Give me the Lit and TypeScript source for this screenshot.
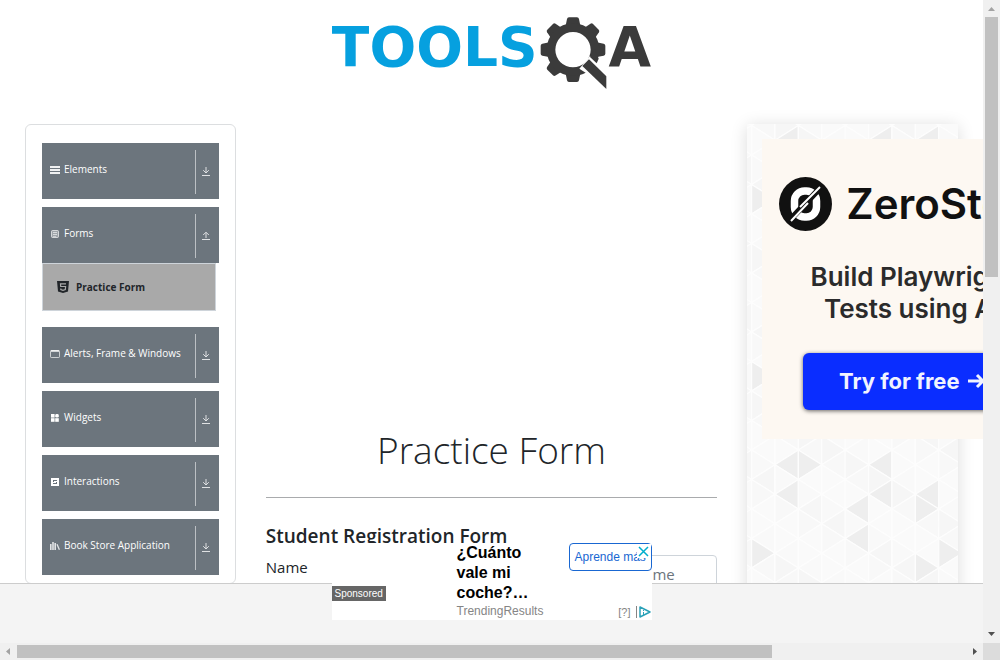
import { LitElement, html, css, svg, TemplateResult } from "lit";
import { customElement, state } from "lit/decorators.js";

interface Group {
  name: string;
  icon: TemplateResult;
  children?: string[];
}

const groups: Group[] = [
  { name: "Elements", icon: svg`<path d="M0 1h10v2H0zM0 4h10v2H0zM0 7h10v2H0z" opacity=".9" />` },
  {
    name: "Forms",
    icon: svg`<rect x="1.5" y="1.5" width="7" height="7" rx="1" fill="#fff" fill-opacity=".35" stroke="#fff" stroke-opacity=".65" /><path d="M3 3h4v1H3zM3 5h4v1H3zM3 7h3v.7H3z" opacity=".6" />`,
    children: ["Practice Form"],
  },
  {
    name: "Alerts, Frame & Windows",
    icon: svg`<rect x=".5" y="1.5" width="9" height="7" rx=".8" fill="none" stroke="#fff" stroke-opacity=".65" /><path d="M1 1h8v2H1z" opacity=".7" />`,
  },
  {
    name: "Widgets",
    icon: svg`<rect x="1" y="1" width="3.6" height="3.6" /><rect x="5.2" y="1" width="3.6" height="3.6" rx="1.4" /><rect x="1" y="5.2" width="3.6" height="3.6" /><rect x="5.2" y="5.2" width="3.6" height="3.6" />`,
  },
  {
    name: "Interactions",
    icon: svg`<path fill-rule="evenodd" d="M1 1h8v8H1zM3 3v2h1V4h3V3zM7 7V5H6v1H3v1z" />`,
  },
  {
    name: "Book Store Application",
    icon: svg`<path d="M0 3h1.6v6H0zM2.2 1h1.6v8H2.2zM4.4 2H6v7H4.4zM6.4 3.4l1.2-.4L10 8.6l-1.2.4z" opacity=".8" />`,
  },
];

// Triangular wallpaper: strips between vertical lines, apex rows half a cell apart.
const STEP_X = 23.4;
const STEP_Y = 14.75;
const darkCells = new Set([
  "1:1", "5:1", "7:1", "0:5", "0:17", "1:23", "2:23", "5:23", "1:25", "5:25",
  "7:25", "7:26", "4:26", "0:29", "8:29", "7:30", "4:28",
]);
const wallpaper = () => {
  const cells: TemplateResult[] = [];
  for (let i = -1; i < 9; i++) {
    const left = 4.7 + i * STEP_X;
    const right = left + STEP_X;
    for (let j = -1; j < 39; j++) {
      const y = 1.5 + j * STEP_Y;
      const pointsLeft = Math.abs(i % 2) === Math.abs(j % 2);
      const apex = pointsLeft ? left : right;
      const base = pointsLeft ? right : left;
      const fill = darkCells.has(`${i}:${j}`)
        ? "#eeeeee"
        : ["#f8f8f8", "#fafafa", "#f6f6f6", "#fafafa", "#f9f9f9"][(i * 7 + j * 3 + 60) % 5];
      cells.push(svg`<polygon points="${apex},${y} ${base},${y - STEP_Y} ${base},${y + STEP_Y}" fill=${fill} />`);
    }
  }
  return html`<svg class="wallpaper" viewBox="0 0 211 560" preserveAspectRatio="xMidYMin slice" aria-hidden="true">
    <g stroke="#fdfdfd" stroke-width="1.2">${cells}</g>
  </svg>`;
};

@customElement("tools-logo")
class ToolsLogo extends LitElement {
  static styles = css`
    :host {
      display: flex;
      justify-content: center;
      font: 700 55px/64px "DejaVu Sans", sans-serif;
      color: #3b3b3b;
    }
    .blue { color: #06a0df; }
    .gear { width: 67px; height: 73px; margin: 2px 2px 0; }
  `;
  render() {
    return html`<span class="blue">TOOLS</span>
      <svg class="gear" viewBox="662 35 201 219" role="img" aria-label="Q">
        <g fill="#3b3b3b">
          ${[0, 45, 90, 180, 225, 270, 315].map(
            (a) => svg`<path transform="rotate(${a} 761 133)" d="M738 66L743 41Q744 36 749 36H773Q778 36 779 41L784 66Z" />`
          )}
          <path fill-rule="evenodd" d="M761 54a79 79 0 1 0 0 158a79 79 0 1 0 0-158zM761 80a53 53 0 1 1 0 106a53 53 0 1 1 0-106z" />
        </g>
        <path fill="#fff" d="M780 190L812 152L842 180L863 172V254L845 248L800 203Z" />
        <path fill="#3b3b3b" d="M789 182L809 162L861 213V251Z" />
        <path fill="#3b3b3b" d="M812 155L832 174L838 160L826 130Z" />
      </svg>
      <span>A</span>`;
  }
}

@customElement("side-menu")
class SideMenu extends LitElement {
  static styles = css`
    :host { display: block; }
    .card {
      border: 1px solid #dcdee0;
      border-radius: 6px;
      padding: 18px 16px 8px;
      display: grid;
      gap: 8px;
    }
    .group {
      width: 100%;
      height: 56px;
      padding: 0;
      border: 0;
      background: #6c757d;
      color: #fff;
      display: flex;
      align-items: center;
      font: 500 10px/15px "Open Sans", sans-serif;
      text-align: left;
    }
    .label { flex: 1; display: flex; align-items: center; padding-bottom: 2px; }
    .icon { width: 10px; height: 10px; fill: #fff; margin: 0 4px 0 8px; flex: none; }
    .name { white-space: nowrap; padding-bottom: 2px; }
    .toggle {
      height: 44px;
      width: 23px;
      border-left: 1px solid #bcc0c4;
      display: flex;
      align-items: center;
      justify-content: center;
      margin-top: 2px;
    }
    .arrow { width: 8px; height: 9px; margin: 0 2px 2px 0; fill: none; stroke: #dfe1e3; }
    .list {
      list-style: none;
      margin: 0 3px 8px 0;
      padding: 0;
      border: 1px solid #ced4da;
      background: #a9a9a9;
    }
    .link {
      display: flex;
      align-items: center;
      gap: 7px;
      height: 46px;
      padding-left: 14px;
      color: #212529;
      text-decoration: none;
      font: 700 10px/15px "Open Sans", sans-serif;
    }
    .badge { width: 12px; height: 14px; }
  `;
  @state() private open = "Forms";
  render() {
    return html`<nav class="card">
      ${groups.map((g) => {
        const open = g.name === this.open;
        return html`<div>
          <button class="group" aria-expanded=${open} @click=${() => (this.open = open ? "" : g.name)}>
            <span class="label">
              <svg class="icon" viewBox="0 0 10 10" aria-hidden="true">${g.icon}</svg>
              <span class="name">${g.name}</span>
            </span>
            <span class="toggle">
              <svg class="arrow" viewBox="0 0 8 9" aria-hidden="true">
                <path d=${open ? "M0 8.5h8M4 7V1.5M1.2 4L4 1.2L6.8 4" : "M0 8.5h8M4 0v6M1.2 3.2L4 6L6.8 3.2"} />
              </svg>
            </span>
          </button>
          ${open && g.children
            ? html`<ul class="list">
                ${g.children.map(
                  (c) => html`<li>
                    <a class="link" href="#">
                      <svg class="badge" viewBox="0 0 12 14" aria-hidden="true">
                        <path fill="#212529" d="M0 1h12l-1 10.5L6 13l-5-1.500z" />
                        <path fill="none" stroke="#a9a9a9" stroke-width="1.200" d="M9 3.800H3.500L3.700 6.500h4.900L8.300 9.600L6 10.300L3.800 9.600V8.500" />
                      </svg>${c}</a>
                  </li>`
                )}
              </ul>`
            : ""}
        </div>`;
      })}
    </nav>`;
  }
}

@customElement("zero-banner")
class ZeroBanner extends LitElement {
  static styles = css`
    :host { display: block; font-family: Inter, sans-serif; }
    .panel {
      position: relative;
      height: 560px;
      background: #fff;
      box-shadow: 0 2px 16px rgba(0, 0, 0, 0.14);
      padding: 15px 0 0 15px;
      box-sizing: border-box;
    }
    .wallpaper { position: absolute; inset: 0; width: 100%; height: 100%; }
    .ad {
      position: relative;
      width: 300px;
      height: 300px;
      box-sizing: border-box;
      padding-top: 35px;
      background: #fdf8f2;
      color: #111;
      text-align: center;
    }
    .brand {
      display: flex;
      align-items: center;
      gap: 14px;
      height: 60px;
      padding-left: 17px;
      font-size: 42px;
      font-weight: 600;
      line-height: 60px;
    }
    .mark { width: 53px; height: 54px; }
    .pitch { margin: 27px 0 0; font-size: 26px; line-height: 32px; font-weight: 600; color: #2b2b2b; }
    .try {
      margin: 28px auto 0;
      width: 218px;
      height: 57px;
      box-sizing: border-box;
      padding-bottom: 2px;
      border-radius: 6px;
      background: #0a2dff;
      box-shadow: 0 1px 4px rgba(0, 0, 0, 0.6);
      display: flex;
      align-items: center;
      justify-content: center;
      gap: 8px;
      font-size: 22px;
      font-weight: 700;
      text-decoration: none;
      color: #f1f3ff;
    }
    .go { width: 18px; height: 16px; fill: none; stroke: #f1f3ff; stroke-width: 3; }
  `;
  render() {
    return html`<aside class="panel">
      ${wallpaper()}
      <div class="ad">
        <div class="brand">
          <svg class="mark" viewBox="0 0 53 54" aria-hidden="true">
            <ellipse cx="26.5" cy="27" rx="26.500" ry="27" fill="#111" />
            <rect x="15.500" y="14" width="22" height="26" rx="10" fill="none" stroke="#fff" stroke-width="7.500" />
            <path d="M9 45L43 9" stroke="#111" stroke-width="6" />
            <path d="M12 44L29 26M21 30L41 10" stroke="#fff" stroke-width="2" />
          </svg>
          <span>ZeroStep</span>
        </div>
        <p class="pitch">Build Playwright<br />Tests using AI</p>
        <a class="try" href="#">Try for free
          <svg class="go" viewBox="0 0 18 16" aria-hidden="true"><path d="M0 8h15M9 2l6 6l-6 6" /></svg>
        </a>
      </div>
    </aside>`;
  }
}

@customElement("sticky-ad")
class StickyAd extends LitElement {
  static styles = css`
    :host {
      display: block;
      position: absolute;
      inset: auto 0 0 0;
      height: 60px;
      box-sizing: border-box;
      border-top: 1px solid #ccc;
      background: #f4f4f4;
      font-family: "Liberation Sans", Arial, sans-serif;
    }
    .box {
      position: absolute;
      left: 50%;
      bottom: 23px;
      width: 320px;
      margin-left: -160px;
      height: 77px;
      background: #fff;
      display: grid;
      grid-template: 77px / 125px 1fr 83px;
      align-items: start;
    }
    .tag {
      align-self: end;
      justify-self: start;
      margin-bottom: 19px;
      padding: 0 3px;
      background: #666;
      color: #fff;
      font-size: 10px;
      line-height: 15px;
    }
    .title { margin: 0; font-size: 16px; line-height: 20px; font-weight: 700; color: #000; width: 90px; }
    .source { display: block; font-size: 12px; line-height: 17px; color: #858585; }
    .cta {
      display: block;
      width: 83px;
      height: 28px;
      box-sizing: border-box;
      border: 1px solid #1967d2;
      border-radius: 4px;
      background: #fff;
      color: #1967d2;
      font-size: 12px;
      line-height: 26px;
      padding-left: 5px;
      text-decoration: none;
      white-space: nowrap;
    }
    .side { display: flex; flex-direction: column; justify-content: space-between; height: 77px; }
    .info {
      display: flex;
      justify-content: flex-end;
      align-items: center;
      gap: 5px;
      font-size: 11px;
      line-height: 16px;
      color: #858585;
      padding-right: 1px;
    }
    .choices { width: 15px; height: 12px; }
    .close { position: absolute; top: 1px; right: 1px; width: 14px; height: 14px; padding: 0; border: 0; background: #fff; }
    .cross { display: block; width: 14px; height: 14px; }
  `;
  render() {
    return html`<div class="box">
      <span class="tag">Sponsored</span>
      <div>
        <h2 class="title">¿Cuánto vale mi coche?…</h2>
        <span class="source">TrendingResults</span>
      </div>
      <div class="side">
        <a class="cta" href="#">Aprende más</a>
        <div class="info"><span>[?]</span>
          <svg class="choices" viewBox="0 0 15 12" fill="none" aria-hidden="true">
            <path d="M.5 0v12" stroke="#858585" />
            <path d="M4 1L14 6L4 11Z" stroke="#2aa1b8" stroke-width="1.500" stroke-linejoin="round" />
            <path d="M7.500 4v1M7.500 6v3" stroke="#2aa1b8" />
          </svg>
        </div>
      </div>
      <button class="close" aria-label="Cerrar">
        <svg class="cross" viewBox="0 0 14 14"><path d="M2 3l9 9M11 3l-9 9" stroke="#00aecd" stroke-width="1.500" /></svg>
      </button>
    </div>`;
  }
}

@customElement("app-root")
class AppRoot extends LitElement {
  static styles = css`
    :host {
      display: grid;
      grid-template: minmax(0, 1fr) 17px / minmax(0, 1fr) 17px;
      height: 100vh;
      background: #fff;
      color: #212529;
      font: 400 15px/24px "Open Sans", sans-serif;
    }
    .view { position: relative; overflow: hidden; }
    .header { height: 109px; padding-top: 15px; }
    .row { display: grid; grid-template-columns: 3fr 6fr 3fr; padding: 0 10px; }
    .col { padding: 0 15px; min-width: 0; }
    .title {
      margin: 302px 0 0;
      font-size: 37px;
      line-height: 48px;
      font-weight: 300;
      text-align: center;
      padding-bottom: 23px;
      border-bottom: 1px solid #a9abad;
    }
    .heading { margin: 26px 0 7px; font-size: 19px; line-height: 24px; font-weight: 600; }
    .fields { display: grid; grid-template-columns: 90px 1fr 130px; gap: 30px; align-items: start; }
    .input {
      width: 100%;
      height: 38px;
      box-sizing: border-box;
      border: 1px solid #ced4da;
      border-radius: 4px;
      padding: 6px 12px;
      font: inherit;
    }
    .input::placeholder { color: #6c757d; }
    .bar { background: #f0f0f0; display: flex; align-items: center; }
    .vertical { flex-direction: column; }
    .arrow { width: 17px; height: 17px; flex: none; fill: #505050; }
    .off { fill: #a3a3a3; }
    .track { flex: 1; display: flex; align-self: stretch; }
    .vertical .track { flex-direction: column; padding: 0 2px; }
    .horizontal .track { padding: 2px 0; }
    .thumb { background: #c1c1c1; }
    .vertical .thumb { height: 42.7%; }
    .horizontal .thumb { width: 79.6%; }
    .corner { background: #dcdcdc; }
  `;
  private bar(kind: string, back: string, forward: string) {
    return html`<div class="bar ${kind}">
      <svg class="arrow off" viewBox="0 0 17 17"><path d=${back} /></svg>
      <div class="track"><div class="thumb"></div></div>
      <svg class="arrow" viewBox="0 0 17 17"><path d=${forward} /></svg>
    </div>`;
  }
  render() {
    return html`
      <div class="view">
        <header class="header"><tools-logo></tools-logo></header>
        <div class="row">
          <div class="col"><side-menu></side-menu></div>
          <main class="col">
            <h1 class="title">Practice Form</h1>
            <h5 class="heading">Student Registration Form</h5>
            <form class="fields">
              <label for="first">Name</label>
              <input class="input" id="first" placeholder="First Name" />
              <input class="input" aria-label="Last Name" placeholder="Last Name" />
            </form>
          </main>
          <div class="col"><zero-banner></zero-banner></div>
        </div>
        <sticky-ad></sticky-ad>
      </div>
      ${this.bar("vertical", "M5 11l3.500-4l3.500 4z", "M5 6h7l-3.500 4z")}
      ${this.bar("horizontal", "M10 5v7l-4-3.500z", "M7 5l4 3.500l-4 3.500z")}
      <div class="corner"></div>
    `;
  }
}
